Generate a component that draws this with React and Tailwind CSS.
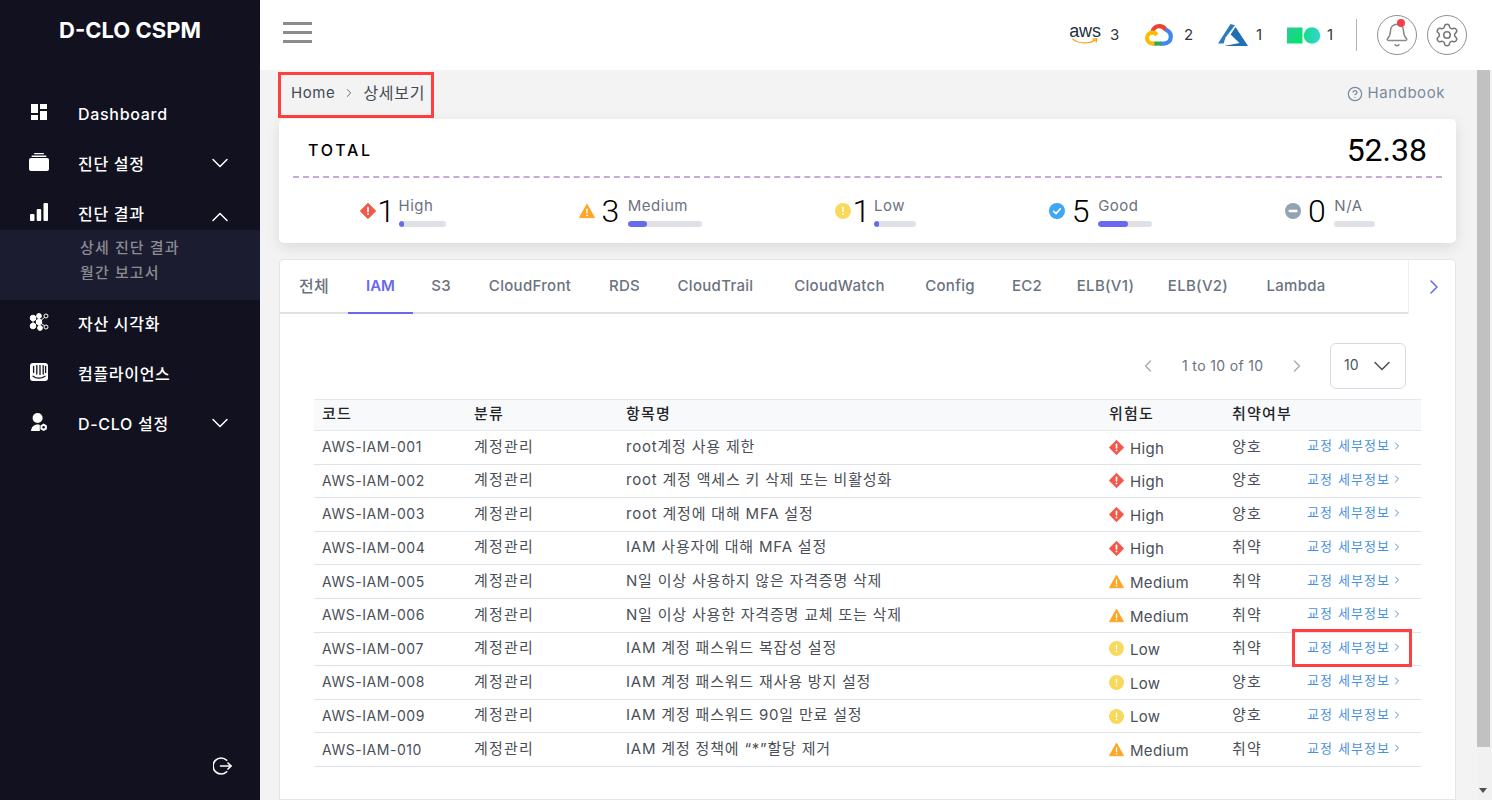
import React from "react";
import { ChevronDown, ChevronUp, ChevronLeft, ChevronRight, Settings, Bell, CircleHelp } from "lucide-react";

const FONT = "font-['Inter','Noto_Sans_CJK_KR',sans-serif]";

const rows = [
  ["AWS-IAM-001", "root계정 사용 제한", "High", "양호"],
  ["AWS-IAM-002", "root 계정 액세스 키 삭제 또는 비활성화", "High", "양호"],
  ["AWS-IAM-003", "root 계정에 대해 MFA 설정", "High", "양호"],
  ["AWS-IAM-004", "IAM 사용자에 대해 MFA 설정", "High", "취약"],
  ["AWS-IAM-005", "N일 이상 사용하지 않은 자격증명 삭제", "Medium", "취약"],
  ["AWS-IAM-006", "N일 이상 사용한 자격증명 교체 또는 삭제", "Medium", "취약"],
  ["AWS-IAM-007", "IAM 계정 패스워드 복잡성 설정", "Low", "취약"],
  ["AWS-IAM-008", "IAM 계정 패스워드 재사용 방지 설정", "Low", "양호"],
  ["AWS-IAM-009", "IAM 계정 패스워드 90일 만료 설정", "Low", "양호"],
  ["AWS-IAM-010", "IAM 계정 정책에 “*”할당 제거", "Medium", "취약"],
];

// widths follow the reference tab strip, the font here runs a little different
const tabs = [
  { label: "전체", width: "w-[68px] text-[16px]" },
  { label: "IAM", width: "w-[65px]" },
  { label: "S3", width: "w-[56px]" },
  { label: "CloudFront", width: "w-[122px]" },
  { label: "RDS", width: "w-[67px]" },
  { label: "CloudTrail", width: "w-[115px]" },
  { label: "CloudWatch", width: "w-[133px]" },
  { label: "Config", width: "w-[88px]" },
  { label: "EC2", width: "w-[66px]" },
  { label: "ELB(V1)", width: "w-[91px]" },
  { label: "ELB(V2)", width: "w-[94px]" },
  { label: "Lambda", width: "w-[102px]" },
];

const stats = [
  { label: "High", value: 1, bar: "w-[47px]", fill: "w-[5px]" },
  { label: "Medium", value: 3, bar: "w-[74px]", fill: "w-[19px]" },
  { label: "Low", value: 1, bar: "w-[42px]", fill: "w-[5px]" },
  { label: "Good", value: 5, bar: "w-[54px]", fill: "w-[30px]" },
  { label: "N/A", value: 0, bar: "w-[41px]", fill: "w-0" },
];

const RiskIcon = ({ type, className = "w-[16px] h-[16px]" }) => {
  if (type === "High")
    return (
      <svg viewBox="0 0 16 16" className={className}>
        <path d="M8 0.3 15.7 8 8 15.7 0.3 8Z" fill="#f4574a" stroke="#f4574a" strokeLinejoin="round" />
        <rect x="7.1" y="3.8" width="1.8" height="5.4" rx="0.8" fill="#fff" />
        <circle cx="8" cy="11.1" r="1" fill="#fff" />
      </svg>
    );
  if (type === "Medium")
    return (
      <svg viewBox="0 0 16 16" className={className}>
        <path d="M8 1.2 15.5 14.6H0.5Z" fill="#ffa526" stroke="#ffa526" strokeLinejoin="round" />
        <rect x="7.3" y="5.6" width="1.4" height="5" rx="0.6" fill="#fff" />
        <circle cx="8" cy="12.3" r="0.9" fill="#fff" />
      </svg>
    );
  if (type === "Low")
    return (
      <svg viewBox="0 0 16 16" className={className}>
        <circle cx="8" cy="8" r="8" fill="#f8d95c" />
        <rect x="7.3" y="3.6" width="1.4" height="5.6" rx="0.6" fill="#fff" />
        <circle cx="8" cy="11.2" r="0.9" fill="#fff" />
      </svg>
    );
  if (type === "Good")
    return (
      <svg viewBox="0 0 16 16" className={className}>
        <circle cx="8" cy="8" r="8" fill="#3fa5f5" />
        <path d="M4.6 8.3 7 10.6 11.4 5.8" fill="none" stroke="#fff" strokeWidth="1.6" strokeLinecap="round" strokeLinejoin="round" />
      </svg>
    );
  return (
    <svg viewBox="0 0 16 16" className={className}>
      <circle cx="8" cy="8" r="8" fill="#94a3b2" />
      <rect x="3.6" y="6.8" width="8.8" height="2.4" rx="0.6" fill="#fff" />
    </svg>
  );
};

const DashIcon = () => (
  <svg viewBox="0 0 16 16" className="w-[16px] h-[16px] fill-white">
    <rect x="0" y="0" width="7" height="9" />
    <rect x="9" y="0" width="7" height="5" />
    <rect x="0" y="11" width="7" height="5" />
    <rect x="9" y="7" width="7" height="9" />
  </svg>
);

const StackIcon = () => (
  <svg viewBox="0 0 20 18" className="w-[20px] h-[18px] fill-white">
    <rect x="5" y="0" width="10" height="1.2" rx="0.6" />
    <rect x="2.5" y="2.6" width="15" height="1.4" rx="0.7" />
    <rect x="0" y="5" width="20" height="13" rx="2" />
  </svg>
);

const BarsIcon = () => (
  <svg viewBox="0 0 18 18" className="w-[18px] h-[18px] fill-white">
    <rect x="0" y="11" width="4.5" height="7" rx="1" />
    <rect x="6.7" y="6" width="4.5" height="12" rx="1" />
    <rect x="13.5" y="0" width="4.5" height="18" rx="1" />
  </svg>
);

const NodesIcon = () => (
  <svg viewBox="0 0 20 18" className="w-[20px] h-[18px]">
    <g fill="#fff" stroke="#fff" strokeWidth="1">
      <line x1="4" y1="5" x2="10" y2="9" />
      <line x1="10" y1="9" x2="16" y2="4" />
      <line x1="10" y1="9" x2="16" y2="13" />
      <line x1="10" y1="9" x2="4" y2="13" />
      <line x1="4" y1="5" x2="4" y2="13" />
      <line x1="10" y1="3" x2="10" y2="15" />
      <circle cx="4" cy="5" r="2.8" />
      <circle cx="10" cy="9" r="2.8" />
      <circle cx="4" cy="13" r="2.8" />
      <circle cx="11" cy="15" r="2.4" />
      <circle cx="10" cy="3" r="2.4" />
    </g>
    <g fill="#11111f" stroke="#fff" strokeWidth="1">
      <circle cx="17" cy="3" r="2" />
      <circle cx="17" cy="14" r="2" />
    </g>
  </svg>
);

const IntercomIcon = () => (
  <svg viewBox="0 0 18 18" className="w-[18px] h-[18px]">
    <rect x="0" y="0" width="18" height="18" rx="3" fill="#fff" />
    <g stroke="#11111f" strokeWidth="1.3" strokeLinecap="round" fill="none">
      <path d="M3.6 3.5V9.5" />
      <path d="M6.8 2.6V11" />
      <path d="M10 2.6V11.5" />
      <path d="M13.2 2.6V11" />
      <path d="M15.6 3.5V9.5" />
      <path d="M3 13.2C6.5 15.6 11.5 15.6 15 13.2" />
    </g>
  </svg>
);

const UserGearIcon = () => (
  <svg viewBox="0 0 16 18" className="w-[16px] h-[18px] fill-white">
    <circle cx="6.6" cy="5" r="5" />
    <path d="M0 18C0.4 14 3 11.6 6.8 11.6C7.6 11.6 8.2 11.7 8.8 11.9V18Z" />
    <path d="M12.6 10.6 15.9 12.5V16.2L12.6 18 9.4 16.2V12.5Z" />
    <circle cx="12.6" cy="14.3" r="1.2" fill="#11111f" />
  </svg>
);

const SignOutIcon = () => (
  <svg viewBox="0 0 20 18" className="w-[20px] h-[18px]" fill="none" stroke="#fff" strokeWidth="1.6" strokeLinecap="round" strokeLinejoin="round">
    <path d="M13.7 3.3A8 8 0 1 0 13.7 14.7" />
    <path d="M7.5 9H18" />
    <path d="M15 6 18 9 15 12" />
  </svg>
);

const AwsLogo = () => (
  <div className="relative flex flex-col items-center w-[32px] h-[22px] -mt-[1px]">
    <span className="font-['Liberation_Sans',sans-serif] text-[18px] leading-[15px] text-[#252f3e] tracking-[-0.2px]">aws</span>
    <svg viewBox="0 0 32 10" className="absolute left-0 top-[14px] w-[32px] h-[8px]">
      <path d="M0.6 1.4C8 7.4 21 7.8 29 2.6" fill="none" stroke="#f90" strokeWidth="1.5" strokeLinecap="round" />
      <path d="M25.8 1.4 30.8 0.8 29.8 5.4" fill="none" stroke="#f90" strokeWidth="1.3" strokeLinecap="round" />
    </svg>
  </div>
);

const GcpLogo = () => (
  <svg viewBox="0 0 28 22" className="w-[28px] h-[22px]" fill="none" strokeWidth="4.2">
    <path d="M7.2 8.7C7.8 4.6 11 2.2 14.2 2.2C17.2 2.2 19.6 3.8 21 6.2" stroke="#ea4335" />
    <path d="M20.6 5.6C24 7 26 9.8 25.8 13C25.6 16.8 22.6 19.6 19 19.6H15" stroke="#4285f4" />
    <path d="M16 19.6H8.6" stroke="#34a853" />
    <path d="M9.4 19.6H7.6C4.4 19.6 2.1 17 2.1 14C2.1 11 4.4 8.6 7.6 8.6C9.4 8.6 11 9.6 11.9 11" stroke="#fbbc05" />
  </svg>
);

const AzureLogo = () => (
  <svg viewBox="0 0 30 22" className="w-[30px] h-[22px]">
    <path d="M12.5 0 17 1.2 7.5 13.5 5.6 19.5H0Z" fill="#2b7bbf" />
    <path d="M17.5 3 30 22H6L21.5 19 12.6 10.5Z" fill="#1f6fb5" />
  </svg>
);

const NcpLogo = () => (
  <svg viewBox="0 0 34 17" className="w-[34px] h-[17px]">
    <defs>
      <linearGradient id="ncpSquare" x1="0" y1="0" x2="1" y2="1">
        <stop offset="0" stopColor="#2fc99c" />
        <stop offset="1" stopColor="#00e664" />
      </linearGradient>
      <linearGradient id="ncpCircle" x1="0" y1="0" x2="1" y2="0">
        <stop offset="0" stopColor="#12dc8c" />
        <stop offset="1" stopColor="#38d5cf" />
      </linearGradient>
    </defs>
    <rect x="0" y="0.5" width="15.5" height="16" fill="url(#ncpSquare)" />
    <circle cx="25" cy="8.5" r="8.3" fill="url(#ncpCircle)" />
  </svg>
);

const NavItem = ({ icon, label, chevron, className = "h-[50px]" }) => (
  <div className={`flex items-center pl-[28px] pr-[26px] text-[16px] font-medium tracking-[0.7px] text-white ${className}`}>
    <div className="w-[22px] mr-[28px] flex items-center justify-center -mt-[3px]">{icon}</div>
    <span className="flex-1 pt-[1px]">{label}</span>
    {chevron === "down" && <ChevronDown className="w-[28px] h-[28px] -my-[4px] -mt-[4px]" strokeWidth={1.3} />}
    {chevron === "up" && <ChevronUp className="w-[28px] h-[28px] -my-[4px] mt-[2px]" strokeWidth={1.3} />}
  </div>
);

const Sidebar = () => (
  <aside className="w-[260px] h-[800px] shrink-0 bg-[#11111f] flex flex-col">
    <div className="h-[89px] pt-[15px] text-center text-[22px] font-bold leading-[30px] text-white">D-CLO CSPM</div>
    <NavItem icon={<DashIcon />} label="Dashboard" className="h-[50px] pb-[2px]" />
    <NavItem icon={<StackIcon />} label="진단 설정" chevron="down" className="h-[50px] pb-[2px]" />
    <NavItem icon={<BarsIcon />} label="진단 결과" chevron="up" className="h-[41px] pt-[8px]" />
    <div className="h-[70px] bg-[#1c1c30] pl-[80px] pt-[5px] text-[15px] font-medium tracking-[1.1px] leading-[25px] text-[#8b8b94]">
      <div>상세 진단 결과</div>
      <div>월간 보고서</div>
    </div>
    <NavItem icon={<NodesIcon />} label="자산 시각화" className="h-[50px] pb-[4px]" />
    <NavItem icon={<IntercomIcon />} label="컴플라이언스" className="h-[50px] pb-[4px]" />
    <NavItem icon={<UserGearIcon />} label="D-CLO 설정" chevron="down" className="h-[50px] pb-[4px]" />
    <div className="flex-1 flex items-end justify-end pr-[27px] pb-[25px]">
      <SignOutIcon />
    </div>
  </aside>
);

const CloudCount = ({ logo, count, gap }) => (
  <div className={`flex items-center ${gap}`}>
    {logo}
    <span className="text-[15px] text-[#33373d]">{count}</span>
  </div>
);

const Header = () => (
  <header className="h-[70px] bg-white flex items-center pl-[23px] pr-[25px]">
    <div className="flex flex-col gap-[6px] -mt-[6px]">
      <div className="w-[29px] h-[3px] bg-[#8c8c8c]" />
      <div className="w-[29px] h-[3px] bg-[#8c8c8c]" />
      <div className="w-[29px] h-[3px] bg-[#8c8c8c]" />
    </div>
    <div className="flex-1" />
    <div className="flex items-center">
      <CloudCount logo={<AwsLogo />} count="3" gap="gap-[9px] w-[76px]" />
      <CloudCount logo={<GcpLogo />} count="2" gap="gap-[11px] w-[73px]" />
      <CloudCount logo={<AzureLogo />} count="1" gap="gap-[8px] w-[69px]" />
      <CloudCount logo={<NcpLogo />} count="1" gap="gap-[6px] w-[69px]" />
    </div>
    <div className="w-px h-[32px] bg-[#b5b5b5] mr-[20px]" />
    <div className="relative w-[40px] h-[40px] rounded-full border border-[#8f8f8f] flex items-center justify-center">
      <Bell className="w-[26px] h-[26px] text-[#8a8a8a]" strokeWidth={1.4} />
      <div className="absolute top-[3px] right-[11px] w-[8px] h-[8px] rounded-full bg-[#f0414b]" />
    </div>
    <div className="ml-[10px] w-[40px] h-[40px] rounded-full border border-[#8f8f8f] flex items-center justify-center">
      <Settings className="w-[26px] h-[26px] text-[#777]" strokeWidth={1.4} />
    </div>
  </header>
);

const Breadcrumb = () => (
  <div className="flex items-center justify-between pl-[18px] pr-[32px] h-[49px] pt-[1px]">
    <div className="flex items-center w-[156px] h-[46px] border-[3px] border-[#ff4040] pl-[10px] pb-[4px] text-[15px] text-[#444b55]">
      <span className="tracking-[0.6px]">Home</span>
      <ChevronRight className="w-[14px] h-[14px] ml-[7px] mr-[7px] text-[#555]" strokeWidth={1.5} />
      <span className="text-[16px] tracking-[0.7px]">상세보기</span>
    </div>
    <div className="flex items-center gap-[5px] -mt-[3px] text-[15px] tracking-[0.55px] text-[#7b8a9e]">
      <CircleHelp className="w-[16px] h-[16px]" strokeWidth={1.9} />
      <span>Handbook</span>
    </div>
  </div>
);

const TotalCard = () => (
  <section className="ml-[19px] mr-[21px] h-[124px] bg-white rounded-[5px] shadow-[0_4px_14px_rgba(0,0,0,0.10)] px-[14px]">
    <div className="h-[59px] pt-[4px] border-b-2 border-dashed border-[#c3acd8] flex items-center justify-between pl-[15px] pr-[15px]">
      <span className="text-[16px] font-medium tracking-[2.7px] text-black mt-[1px]">TOTAL</span>
      <span className="font-['Roboto',sans-serif] text-[32px] text-black leading-none">52.38</span>
    </div>
    <div className="flex justify-around pt-[15px]">
      {stats.map((s) => (
        <div key={s.label} className="flex items-center">
          <RiskIcon type={s.label} />
          <span
            className={
              s.value === 1
                ? "font-['Roboto',sans-serif] text-[32px] font-light leading-[36px] text-black w-[11px] ml-[5px] flex justify-center"
                : "font-['Roboto',sans-serif] text-[32px] font-light leading-[36px] text-black w-[21px] ml-[5px] flex justify-center"
            }
          >
            {s.value}
          </span>
          <div className="ml-[7px]">
            <div className="text-[15px] leading-[20px] tracking-[0.5px] text-[#6b7280]">{s.label}</div>
            <div className={`${s.bar} h-[6px] mt-[5px] rounded-full bg-[#dee1e6] overflow-hidden`}>
              <div className={`${s.fill} h-full rounded-full bg-[#6869ef]`} />
            </div>
          </div>
        </div>
      ))}
    </div>
  </section>
);

const Tabs = () => (
  <div className="h-[54px] flex">
    <div className="w-[1128px] flex border-b-2 border-[#dee2e6]">
      {tabs.map((t) =>
        t.label === "IAM" ? (
          <div key={t.label} className={`${t.width} h-[54px] shrink-0 flex items-center justify-center text-[15px] font-semibold text-[#6869ef] border-b-2 border-[#6869ef]`}>
            {t.label}
          </div>
        ) : (
          <div key={t.label} className={`${t.width} h-[52px] shrink-0 flex items-center justify-center text-[15px] font-medium tracking-[0.3px] whitespace-nowrap text-[#6b7280]`}>
            {t.label}
          </div>
        )
      )}
    </div>
    <div className="flex-1 border-l border-[#eeeeee] flex items-center justify-center pl-[4px]">
      <ChevronRight className="w-[24px] h-[24px] text-[#6869ef]" strokeWidth={1.5} />
    </div>
  </div>
);

const Pager = () => (
  <div className="flex items-center justify-end mt-[29px] mr-[49px] text-[14px] text-[#6b7280]">
    <ChevronLeft className="w-[20px] h-[20px] text-[#a8adb5]" strokeWidth={1.8} />
    <span className="w-[136px] pl-[24px] -mt-[1px] text-left tracking-[0.35px]">1 to 10 of 10</span>
    <ChevronRight className="w-[20px] h-[20px] text-[#a8adb5] -ml-[7px]" strokeWidth={1.8} />
    <div className="ml-[23px] w-[76px] h-[46px] rounded-[6px] border border-[#d6dae4] flex items-center justify-between pl-[13px] pr-[9px] text-[#4b5563]">
      <span className="-mt-[3px]">10</span>
      <ChevronDown className="w-[28px] h-[28px] text-[#555]" strokeWidth={1.4} />
    </div>
  </div>
);

const COLS = "grid grid-cols-[152px_152px_483px_123px_75px_122px]";

const DetailLink = ({ marked }) => (
  <div className="relative pl-[8px] text-[13px] leading-none text-[#4a90e2] flex items-center -mt-[3px] tracking-[1.1px] whitespace-nowrap">
    <span>교정 세부정보</span>
    <ChevronRight className="w-[12px] h-[12px] ml-[1px]" strokeWidth={2} />
    {marked && <div className="absolute left-[-7px] top-[-12px] w-[120px] h-[38px] border-[3px] border-[#ff4040]" />}
  </div>
);

const Table = () => (
  <div className="mx-[34px] mt-[10px] text-[14px]">
    <div className={`${COLS} h-[32px] items-center bg-[#f8f9fa] border-y border-[#e5e7eb] text-[15px] font-medium tracking-[1.2px] text-[#212529]`}>
      {["코드", "분류", "항목명", "위험도", "취약여부"].map((h) => (
        <div key={h} className="px-[8px] -mt-[2px] whitespace-nowrap">{h}</div>
      ))}
    </div>
    {rows.map((r, i) => (
      <div key={r[0]} className={`${COLS} h-[33.6px] items-center border-b border-[#dfe2e8] text-[#4a4f57]`}>
        <div className="px-[8px] -mt-[1px] tracking-[0.55px]">{r[0]}</div>
        <div className="px-[8px] -mt-[1px] text-[15px] tracking-[1.2px]">계정관리</div>
        <div className="px-[8px] -mt-[1px] text-[15px] tracking-[0.8px]">{r[1]}</div>
        <div className="px-[8px] flex items-center">
          <RiskIcon type={r[2]} className="w-[15px] h-[15px] shrink-0" />
          <span className="ml-[6px] mt-[3px] text-[15px] tracking-[0.3px]">{r[2]}</span>
        </div>
        <div className="px-[8px] -mt-[1px] text-[15px] tracking-[1.2px]">{r[3]}</div>
        <DetailLink marked={i === 6} />
      </div>
    ))}
  </div>
);

const Scrollbar = () => (
  <div className="w-[15px] shrink-0 bg-[#f1f1f1] relative">
    <div className="w-[13px] h-[677px] bg-[#c1c1c1]" />
    <div className="absolute bottom-[7px] left-[2px] w-0 h-0 border-x-[4px] border-x-transparent border-t-[5px] border-t-[#505050]" />
  </div>
);

export default function App() {
  return (
    <div className={`${FONT} flex w-[1492px] h-[800px] overflow-hidden`}>
      <Sidebar />
      <div className="flex-1 flex flex-col min-w-0">
        <Header />
        <div className="flex-1 flex bg-[#f3f3f3] min-h-0">
          <main className="flex-1 min-w-0 flex flex-col overflow-hidden">
            <Breadcrumb />
            <TotalCard />
            <section className="ml-[19px] mr-[21px] mt-[16px] flex-1 bg-white border border-[#e3e5e8] rounded-t-[4px]">
              <Tabs />
              <Pager />
              <Table />
            </section>
          </main>
          <Scrollbar />
        </div>
      </div>
    </div>
  );
}
